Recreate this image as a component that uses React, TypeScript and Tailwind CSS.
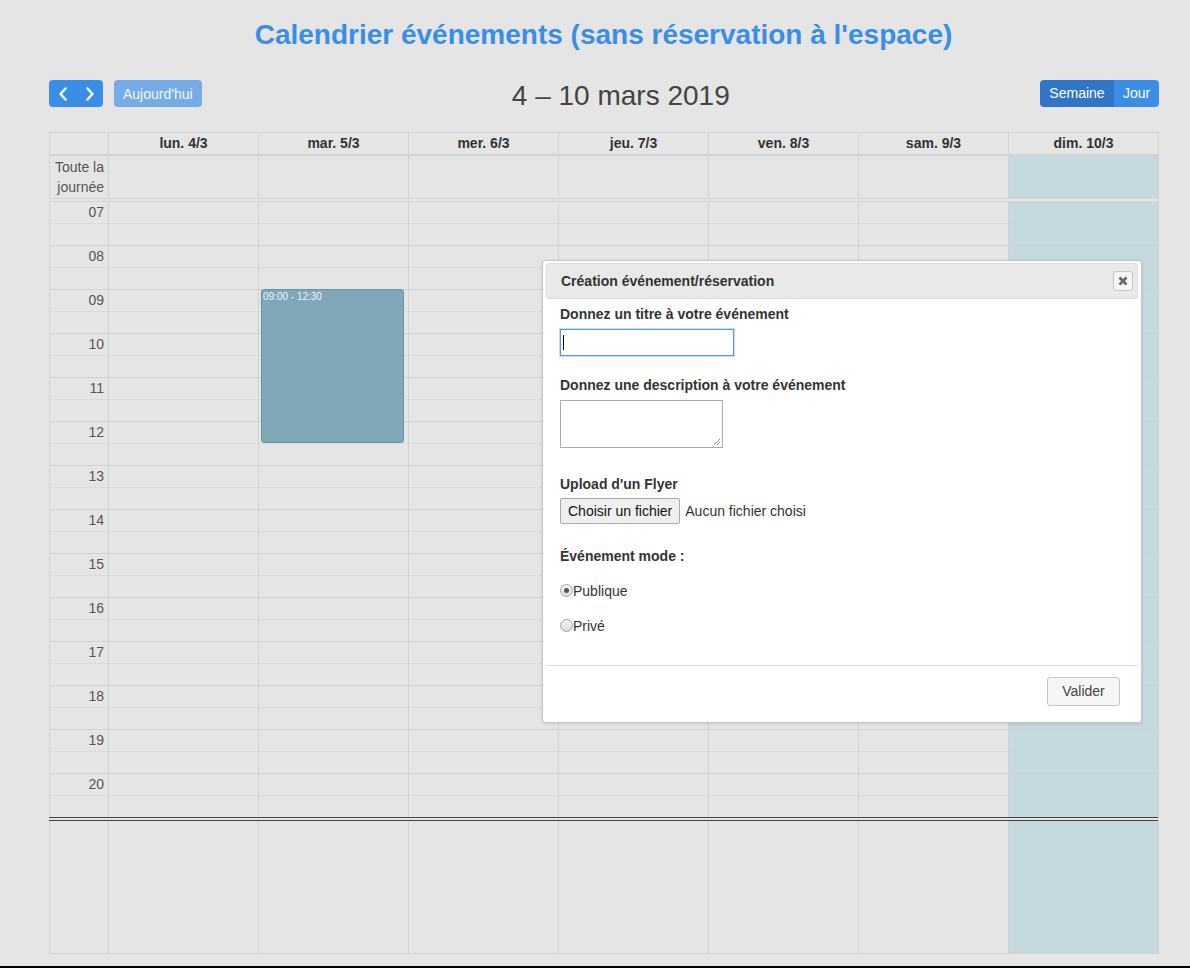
import React from 'react';

const days = ['lun. 4/3', 'mar. 5/3', 'mer. 6/3', 'jeu. 7/3', 'ven. 8/3', 'sam. 9/3', 'dim. 10/3'];
const hours = ['07', '08', '09', '10', '11', '12', '13', '14', '15', '16', '17', '18', '19', '20'];

const line = 'border-[#d0d3d6]';

function Chevron({ dir }: { dir: 'left' | 'right' }) {
  return (
    <svg width="10" height="14" viewBox="0 0 10 14" fill="none">
      <path
        d={dir === 'left' ? 'M7.5 1.5 L2.5 7 L7.5 12.5' : 'M2.5 1.5 L7.5 7 L2.5 12.5'}
        stroke="white"
        strokeWidth="2.4"
        strokeLinecap="round"
        strokeLinejoin="round"
      />
    </svg>
  );
}

function TimeRow({ index }: { index: number }) {
  const first = index % 2 === 0;
  const last = index === hours.length * 2 - 1;
  const bottom = last ? '' : first ? 'border-b [border-bottom-style:dotted]' : 'border-b';
  return (
    <div className={`grid grid-cols-[59px_repeat(7,150px)] ${last ? 'h-[21px]' : 'h-[22px]'}`}>
      <div className={`border-l ${line} ${bottom} border-b-[#cfd2d5] text-right pr-[4px] text-[14px] leading-[20px] text-[#555]`}>
        {first ? hours[index / 2] : ''}
      </div>
      {days.map((d, i) => (
        <div
          key={d}
          className={`border-l ${line} ${bottom} ${i === 6 ? 'bg-[#c5d9de] border-b-[#c3d5da]' : 'border-b-[#cfd2d5]'}`}
        />
      ))}
    </div>
  );
}

export default function App() {
  return (
    <div className="relative h-[968px] bg-[#e5e5e5] flex flex-col font-['Liberation_Sans',Arial,sans-serif] text-[#333]">
      <div className="flex-1">
        <h1 className="pt-[19px] pl-[17px] text-center text-[28px] leading-[32px] font-bold text-[#3a8ee6]">
          Calendrier événements (sans réservation à l'espace)
        </h1>

        {/* Toolbar */}
        <div className="mt-[29px] ml-[49px] w-[1110px] h-[27px] flex items-center">
          <div className="flex items-center">
            <div className="flex h-[27px] rounded-[4px] bg-[#3a8ee6] overflow-hidden">
              <button className="w-[27px] flex items-center justify-center">
                <Chevron dir="left" />
              </button>
              <button className="w-[27px] flex items-center justify-center">
                <Chevron dir="right" />
              </button>
            </div>
            <button className="ml-[11px] h-[27px] px-[9px] pt-[1px] rounded-[4px] bg-[#3a8ee6] opacity-65 text-white text-[14px]">
              Aujourd'hui
            </button>
          </div>
          <div className="flex-1 mt-[4px] text-center text-[28px] leading-[32px] text-[#444]">4 – 10 mars 2019</div>
          <div className="flex h-[27px] rounded-[4px] overflow-hidden text-[14px] text-white">
            <button className="w-[74px] bg-[#3176c6]">Semaine</button>
            <button className="w-[45px] bg-[#3a8ee6]">Jour</button>
          </div>
        </div>

        {/* Calendar */}
        <div className={`mt-[25px] ml-[49px] w-[1110px] border-t border-r border-b ${line}`}>
          <div className="grid grid-cols-[59px_repeat(7,150px)] h-[23px]">
            <div className={`border-l border-b-2 ${line}`} />
            {days.map((d) => (
              <div key={d} className={`border-l border-b-2 ${line} text-center text-[14px] leading-[21px] font-bold text-[#333]`}>
                {d}
              </div>
            ))}
          </div>
          <div className="grid grid-cols-[59px_repeat(7,150px)] h-[43px]">
            <div className={`border-l border-b ${line} text-right pr-[4px] pt-[1px] text-[14px] leading-[20px] text-[#555]`}>
              Toute la
              <br />
              journée
            </div>
            {days.map((d, i) => (
              <div key={d} className={`border-l border-b ${line} ${i === 6 ? 'bg-[#c5d9de]' : ''}`} />
            ))}
          </div>
          <div className={`h-[3px] border-b ${line}`} />

          <div className="relative">
            {Array.from({ length: hours.length * 2 }, (_, i) => (
              <TimeRow key={i} index={i} />
            ))}
            <div className="absolute left-[212px] top-[87px] w-[143px] h-[154px] rounded-[3px] bg-[#7fa7b8] border border-[#6496ab] px-[1px] text-[10px] leading-[13px] text-[#f2f5f7]">
              09:00 - 12:30
            </div>
          </div>

          <div className="h-[4px] border-t border-b border-[#444]" />
          <div className="grid grid-cols-[59px_repeat(7,150px)] h-[132px]">
            <div className={`border-l ${line}`} />
            {days.map((d, i) => (
              <div key={d} className={`border-l ${line} ${i === 6 ? 'bg-[#c5d9de]' : ''}`} />
            ))}
          </div>
        </div>
      </div>
      <div className="h-[2px] bg-black" />

      {/* Dialog */}
      <div className="absolute left-[542px] top-[260px] w-[600px] bg-white border border-[#c5c5c5] rounded-[3px] pt-[2px] px-[3px] pb-[2px] shadow-[0_1px_3px_rgba(0,0,0,0.12)]">
        <div className="h-[36px] flex items-center justify-between border border-[#dddddd] bg-[#e9e9e9] rounded-[3px] pl-[14px] pr-[4px]">
          <span className="text-[14px] font-bold text-[#333]">Création événement/réservation</span>
          <button className="w-[20px] h-[20px] flex items-center justify-center border border-[#c5c5c5] bg-[#f6f6f6] rounded-[3px]">
            <svg width="10" height="10" viewBox="0 0 10 10">
              <path d="M1.5 1.5 L8.5 8.5 M8.5 1.5 L1.5 8.5" stroke="#666" strokeWidth="2.6" />
            </svg>
          </button>
        </div>

        <div className="px-[14px] text-[14px] leading-[20px]">
          <div className="mt-[5px] font-bold">Donnez un titre à votre événement</div>
          <div className="mt-[5px] w-[174px] h-[27px] border border-[#5b97e3] shadow-[0_0_0_1px_rgba(91,151,227,0.35)] flex items-center pl-[2px]">
            <span className="w-[1px] h-[15px] bg-black" />
          </div>

          <div className="mt-[19px] font-bold">Donnez une description à votre événement</div>
          <div className="mt-[5px] relative w-[163px] h-[48px] border border-[#a9a9a9]">
            <svg className="absolute right-[1px] bottom-[1px]" width="8" height="8" viewBox="0 0 8 8">
              <path d="M7 1 L1 7 M7 4 L4 7" stroke="#888" strokeWidth="1" />
            </svg>
          </div>

          <div className="mt-[26px] font-bold">Upload d'un Flyer</div>
          <div className="mt-[4px] flex items-center h-[26px]">
            <button className="h-[26px] px-[7px] border border-[#a9a9a9] rounded-[2px] bg-[#efefef] text-[#111] text-[14px]">
              Choisir un fichier
            </button>
            <span className="ml-[5px] text-[#333]">Aucun fichier choisi</span>
          </div>

          <div className="mt-[22px] font-bold">Événement mode :</div>
          <div className="mt-[15px] flex items-center">
            <span className="w-[13px] h-[13px] rounded-full border border-[#a5a5a5] bg-gradient-to-b from-[#f4f4f4] to-[#dcdcdc] flex items-center justify-center -mt-[2px]">
              <span className="w-[5px] h-[5px] rounded-full bg-[#555]" />
            </span>
            <span>Publique</span>
          </div>
          <div className="mt-[15px] flex items-center">
            <span className="w-[13px] h-[13px] rounded-full border border-[#a5a5a5] bg-gradient-to-b from-[#f4f4f4] to-[#dcdcdc] -mt-[2px]" />
            <span>Privé</span>
          </div>
        </div>

        <div className="mt-[29px] border-t border-[#dddddd] flex justify-end pt-[11px] pb-[14px] pr-[18px]">
          <button className="w-[73px] h-[29px] border border-[#c5c5c5] rounded-[3px] bg-[#f6f6f6] text-[14px] text-[#454545]">
            Valider
          </button>
        </div>
      </div>
    </div>
  );
}
